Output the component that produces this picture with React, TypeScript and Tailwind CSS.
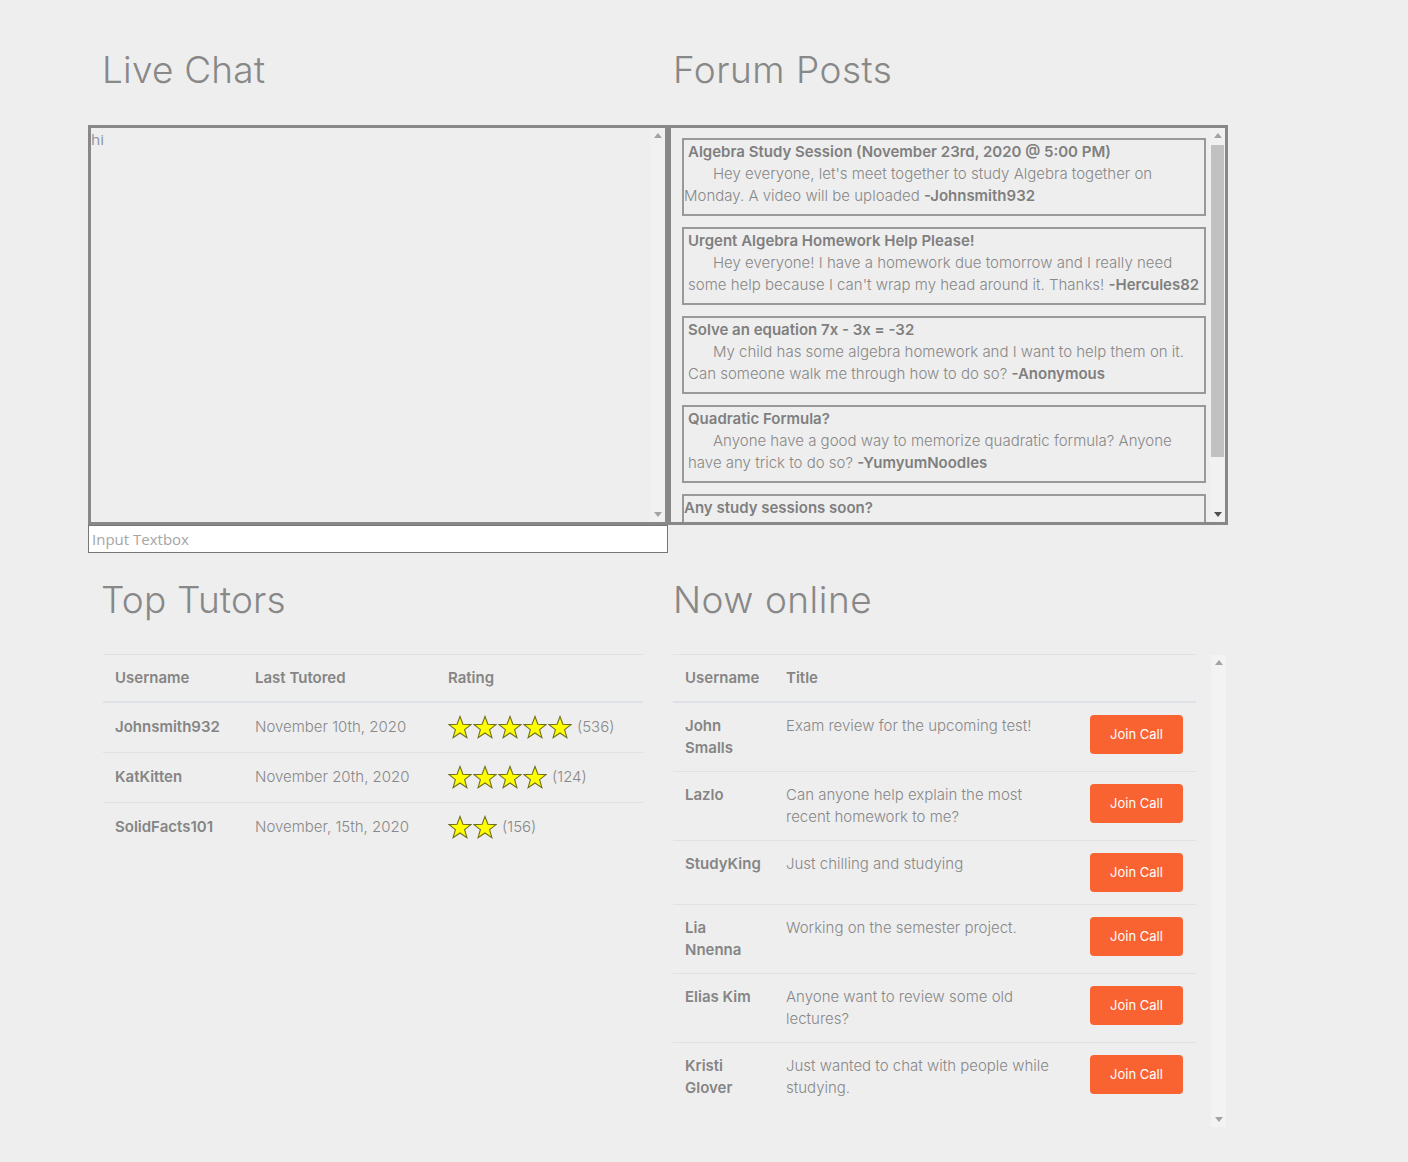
import React from "react";

function Arrow({ up, dark }: { up?: boolean; dark?: boolean }) {
  return (
    <div className="h-[15px] w-[15px] flex items-center justify-center shrink-0">
      <svg width="8" height="5" viewBox="0 0 8 5">
        {up ? (
          <polygon points="4,0 8,5 0,5" fill={dark ? "#505050" : "#a3a3a3"} />
        ) : (
          <polygon points="0,0 8,0 4,5" fill={dark ? "#505050" : "#a3a3a3"} />
        )}
      </svg>
    </div>
  );
}

function Scrollbar({
  thumb,
  downDark,
  track = "bg-[#f1f1f1]",
}: {
  thumb?: { top: number; height: number };
  downDark?: boolean;
  track?: string;
}) {
  return (
    <div className={`w-[15px] shrink-0 flex flex-col ${track}`}>
      <Arrow up />
      <div className="flex-1 px-[1px]">
        {thumb && (
          <div
            className="bg-[#c1c1c1] w-full"
            style={{ marginTop: thumb.top, height: thumb.height }}
          />
        )}
      </div>
      <Arrow dark={downDark} />
    </div>
  );
}

function Star() {
  return (
    <svg width="24" height="25" viewBox="0 0 24 25" className="shrink-0">
      <polygon
        points="12,1.5 14.9,9.3 23,9.6 16.6,14.6 18.9,22.6 12,18 5.1,22.6 7.4,14.6 1,9.6 9.1,9.3"
        fill="#ffff00"
        stroke="#6f6f1c"
        strokeWidth="1.1"
        strokeLinejoin="miter"
      />
    </svg>
  );
}

type Post = {
  title: string;
  l1?: string;
  l2?: string;
  author?: string;
  flushTitle?: boolean;
  flushBody?: boolean;
};

const posts: Post[] = [
  {
    title: "Algebra Study Session (November 23rd, 2020 @ 5:00 PM)",
    l1: "Hey everyone, let's meet together to study Algebra together on",
    l2: "Monday. A video will be uploaded ",
    author: "-Johnsmith932",
    flushBody: true,
  },
  {
    title: "Urgent Algebra Homework Help Please!",
    l1: "Hey everyone! I have a homework due tomorrow and I really need",
    l2: "some help because I can't wrap my head around it. Thanks! ",
    author: "-Hercules82",
  },
  {
    title: "Solve an equation 7x - 3x = -32",
    l1: "My child has some algebra homework and I want to help them on it.",
    l2: "Can someone walk me through how to do so? ",
    author: "-Anonymous",
  },
  {
    title: "Quadratic Formula?",
    l1: "Anyone have a good way to memorize quadratic formula? Anyone",
    l2: "have any trick to do so? ",
    author: "-YumyumNoodles",
  },
  {
    title: "Any study sessions soon?",
    flushTitle: true,
  },
];

const tutors = [
  { u: "Johnsmith932", d: "November 10th, 2020", s: 5, n: "(536)" },
  { u: "KatKitten", d: "November 20th, 2020", s: 4, n: "(124)" },
  { u: "SolidFacts101", d: "November, 15th, 2020", s: 2, n: "(156)" },
];

const online = [
  { u: ["John", "Smalls"], t: ["Exam review for the upcoming test!"] },
  { u: ["Lazlo"], t: ["Can anyone help explain the most", "recent homework to me?"] },
  { u: ["StudyKing"], t: ["Just chilling and studying"] },
  { u: ["Lia", "Nnenna"], t: ["Working on the semester project."] },
  { u: ["Elias Kim"], t: ["Anyone want to review some old", "lectures?"] },
  { u: ["Kristi", "Glover"], t: ["Just wanted to chat with people while", "studying."] },
];

export default function App() {
  return (
    <div className="min-h-[1162px] w-[1408px] bg-[#eeeeee] text-[#888888] font-[Inter,sans-serif] pl-[88px] pt-[51px]">
      {/* Top row */}
      <div className="flex">
        <div className="w-[580px] shrink-0">
          <h2 className="ml-[14px] text-[37px] leading-[37px] font-light tracking-[0.2px]">Live Chat</h2>
          <div className="mt-[37px] h-[400px] border-[3px] border-[#888888] flex">
            <div className="flex-1 font-['Open_Sans',sans-serif] text-[15px] leading-[22px] text-[#8a93a3]">hi</div>
            <Scrollbar />
          </div>
          <input
            className="block h-[28px] w-[580px] border border-[#767676] bg-white px-[3px] font-['Open_Sans',sans-serif] text-[15px] text-[#888] placeholder:text-[#a5a5a5] outline-none"
            placeholder="Input Textbox"
          />
        </div>
        <div className="w-[560px] shrink-0">
          <h2 className="ml-[5px] text-[37px] leading-[37px] font-light tracking-[0.5px]">Forum Posts</h2>
          <div className="mt-[37px] h-[400px] border-[3px] border-[#888888] flex">
            <div className="flex-1 overflow-hidden pl-[11px] pr-[4px] pt-[10px] flex flex-col gap-[11px]">
              {posts.map((p) => (
                <div
                  key={p.title}
                  className={`shrink-0 border-2 border-[#999999] pt-[1px] pb-[7px] px-[4px] text-[15px] leading-[22px] whitespace-nowrap ${p.l1 ? "" : "min-h-[78px]"}`}
                >
                  <div className={`font-semibold text-[#7f7f7f] ${p.flushTitle ? "-ml-[4px]" : ""}`}>{p.title}</div>
                  {p.l1 && <div className="font-light pl-[25px]">{p.l1}</div>}
                  {p.l2 && (
                    <div className={`font-light ${p.flushBody ? "-ml-[4px]" : ""}`}>
                      {p.l2}
                      <span className="font-semibold text-[#7f7f7f]">{p.author}</span>
                    </div>
                  )}
                </div>
              ))}
            </div>
            <Scrollbar thumb={{ top: 2, height: 312 }} downDark />
          </div>
        </div>
      </div>

      {/* Bottom row */}
      <div className="flex mt-[28px]">
        <div className="w-[580px] shrink-0">
          <h2 className="ml-[13px] text-[37px] leading-[37px] font-light tracking-[0.2px]">Top Tutors</h2>
          <div className="mt-[36px] ml-[15px] w-[540px] text-[15px]">
            <div className="flex border-t border-b-2 border-[#dee2e6] py-[12px] leading-[22px] font-semibold text-[#858585]">
              <div className="w-[140px] pl-[12px]">Username</div>
              <div className="w-[193px] pl-[12px]">Last Tutored</div>
              <div className="flex-1 pl-[12px]">Rating</div>
            </div>
            {tutors.map((t, i) => (
              <div
                key={t.u}
                className={`flex items-center h-[49px] box-content ${i > 0 ? "border-t border-[#dee2e6]" : ""}`}
              >
                <div className="w-[140px] pl-[12px] font-semibold text-[#858585]">{t.u}</div>
                <div className="w-[193px] pl-[12px] font-light">{t.d}</div>
                <div className="flex-1 pl-[12px] flex items-center">
                  {Array.from({ length: t.s }).map((_, k) => (
                    <div key={k} className="w-[25px] flex">
                      <Star />
                    </div>
                  ))}
                  <span className="ml-[4px] font-light">{t.n}</span>
                </div>
              </div>
            ))}
          </div>
        </div>
        <div className="w-[560px] shrink-0">
          <h2 className="ml-[5px] text-[37px] leading-[37px] font-light tracking-[0.5px]">Now online</h2>
          <div className="mt-[36px] ml-[5px] w-[553px] h-[473px] flex">
            <div className="w-[523px] text-[15px]">
              <div className="flex border-t border-b-2 border-[#dee2e6] py-[12px] leading-[22px] font-semibold text-[#858585]">
                <div className="w-[101px] pl-[12px]">Username</div>
                <div className="flex-1 pl-[12px]">Title</div>
              </div>
              {online.map((r, i) => (
                <div
                  key={r.u.join(" ")}
                  className={`flex items-start py-[12px] leading-[22px] ${i > 0 ? "border-t border-[#dee2e6]" : ""}`}
                >
                  <div className="w-[101px] pl-[12px] font-semibold text-[#858585]">
                    {r.u.map((x) => (
                      <div key={x}>{x}</div>
                    ))}
                  </div>
                  <div className="w-[304px] pl-[12px] font-light whitespace-nowrap">
                    {r.t.map((x) => (
                      <div key={x}>{x}</div>
                    ))}
                  </div>
                  <div className="pl-[12px]">
                    <button className="w-[93px] h-[39px] rounded-[4px] bg-[#f96332] text-white text-[13px] font-normal leading-none">
                      Join Call
                    </button>
                  </div>
                </div>
              ))}
            </div>
            <div className="w-[15px]" />
            <div className="flex mt-[1px]">
              <Scrollbar track="bg-[#f3f3f3]" />
            </div>
          </div>
        </div>
      </div>
    </div>
  );
}
